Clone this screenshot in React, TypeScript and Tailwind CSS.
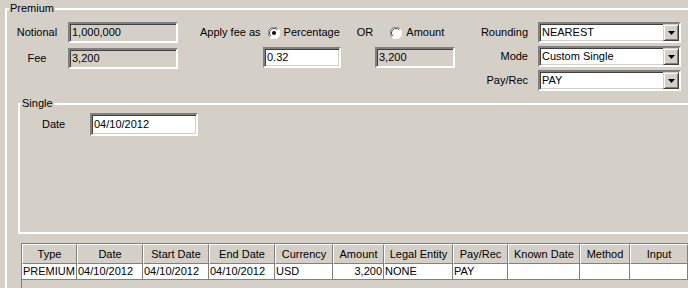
import React from 'react';

const sunken =
  'border-2 border-t-[#808080] border-l-[#808080] border-b-white border-r-white shadow-[inset_1px_1px_0_#404040,inset_-1px_-1px_0_#d4d0c8]';

function Field({ value, width, height = 21, white = false }: { value: string; width: number; height?: number; white?: boolean }) {
  return (
    <div
      className={`${sunken} flex items-center pl-[2px] ${white ? 'bg-white' : 'bg-[#d4d0c8]'}`}
      style={{ width, height }}
    >
      <span className="whitespace-nowrap">{value}</span>
    </div>
  );
}

function Select({ value }: { value: string }) {
  return (
    <div className={`${sunken} bg-white flex items-center w-[143px] h-[21px]`}>
      <span className="flex-1 pl-[2px] whitespace-nowrap">{value}</span>
      <div className="w-[16px] h-[17px] bg-[#d4d0c8] border border-t-[#d4d0c8] border-l-[#d4d0c8] border-b-[#404040] border-r-[#404040] shadow-[inset_1px_1px_0_#fff,inset_-1px_-1px_0_#808080] flex items-center justify-center">
        <svg width="7" height="4" viewBox="0 0 7 4">
          <path d="M0 0h7L3.5 4z" fill="#000" />
        </svg>
      </div>
    </div>
  );
}

function Radio({ checked }: { checked?: boolean }) {
  return (
    <svg width="12" height="12" viewBox="0 0 12 12" className="shrink-0">
      <circle cx="6" cy="6" r="5.5" fill="#fff" />
      <path d="M10.2 1.8A5.5 5.5 0 0 0 1.8 10.2" stroke="#808080" fill="none" />
      <path d="M9.2 2.8A4.2 4.2 0 0 0 2.8 9.2" stroke="#404040" fill="none" />
      <path d="M1.8 10.2A5.5 5.5 0 0 0 10.2 1.8" stroke="#fff" fill="none" />
      {checked && <circle cx="6" cy="6" r="2" fill="#000" />}
    </svg>
  );
}

const columns = [
  { title: 'Type', w: 55, value: 'PREMIUM' },
  { title: 'Date', w: 66, value: '04/10/2012' },
  { title: 'Start Date', w: 66, value: '04/10/2012' },
  { title: 'End Date', w: 66, value: '04/10/2012' },
  { title: 'Currency', w: 58, value: 'USD' },
  { title: 'Amount', w: 51, value: '3,200', right: true },
  { title: 'Legal Entity', w: 69, value: 'NONE' },
  { title: 'Pay/Rec', w: 55, value: 'PAY' },
  { title: 'Known Date', w: 72, value: '' },
  { title: 'Method', w: 50, value: '' },
  { title: 'Input', w: 58, value: '' },
];

export default function App() {
  return (
    <div className="w-[688px] h-[288px] overflow-hidden bg-[#d4d0c8] pt-[8px] pl-[5px] font-['Liberation_Sans',Arial,sans-serif] text-[11px] leading-[13px] text-black">
      <div className="relative border-t-2 border-l-2 border-white w-[683px] h-[300px]">
        <span className="absolute -top-[8px] left-[2px] px-[1px] bg-[#d4d0c8]">Premium</span>

        <div className="flex items-start pt-[12px]">
          <div className="ml-[5px] w-[166px] flex flex-col gap-[5px]">
            <div className="flex items-center">
              <span className="w-[50px] text-center">Notional</span>
              <div className="ml-[6px]"><Field value="1,000,000" width={110} /></div>
            </div>
            <div className="flex items-center">
              <span className="w-[50px] text-center">Fee</span>
              <div className="ml-[6px]"><Field value="3,200" width={110} /></div>
            </div>
          </div>

          <div className="ml-[22px] w-[255px] flex flex-col gap-[4px]">
            <div className="flex items-center h-[21px] whitespace-nowrap">
              <span>Apply fee as</span>
              <span className="ml-[7px]"><Radio checked /></span>
              <span className="ml-[4px]">Percentage</span>
              <span className="ml-[17px]">OR</span>
              <span className="ml-[17px]"><Radio /></span>
              <span className="ml-[4px]">Amount</span>
            </div>
            <div className="flex items-center">
              <div className="ml-[63px]"><Field value="0.32" width={78} white /></div>
              <div className="ml-[34px]"><Field value="3,200" width={80} /></div>
            </div>
          </div>

          <div className="ml-[13px] flex flex-col gap-[3px]">
            {[
              ['Rounding', 'NEAREST'],
              ['Mode', 'Custom Single'],
              ['Pay/Rec', 'PAY'],
            ].map(([label, value]) => (
              <div key={label} className="flex items-center">
                <span className="w-[60px] text-right">{label}</span>
                <div className="ml-[10px]"><Select value={value} /></div>
              </div>
            ))}
          </div>
        </div>

        <div className="relative mt-[12px] ml-[11px] w-[670px] border-t-2 border-l-2 border-b-2 border-white h-[131px]">
          <span className="absolute -top-[8px] left-[1px] px-[1px] bg-[#d4d0c8]">Single</span>
          <div className="flex items-center pt-[8px] pl-[22px]">
            <span className="w-[48px]">Date</span>
            <Field value="04/10/2012" width={108} height={23} white />
          </div>
        </div>

        <div className="ml-[14px] mt-[9px] border-t border-l border-[#808080] h-[60px]">
          <div className="flex">
            {columns.map((c) => (
              <div
                key={c.title}
                className="shrink-0 h-[20px] bg-[#d4d0c8] border-t border-l border-t-white border-l-white border-r border-b border-r-[#808080] border-b-[#808080] flex items-center justify-center whitespace-nowrap"
                style={{ width: c.w }}
              >
                {c.title}
              </div>
            ))}
          </div>
          <div className="flex">
            {columns.map((c) => (
              <div
                key={c.title}
                className={`shrink-0 h-[16px] bg-white border-r border-b border-[#808080] flex items-center whitespace-nowrap ${c.right ? 'justify-end pr-[1px]' : 'pl-[1px]'}`}
                style={{ width: c.w }}
              >
                {c.value}
              </div>
            ))}
          </div>
        </div>
      </div>
    </div>
  );
}
